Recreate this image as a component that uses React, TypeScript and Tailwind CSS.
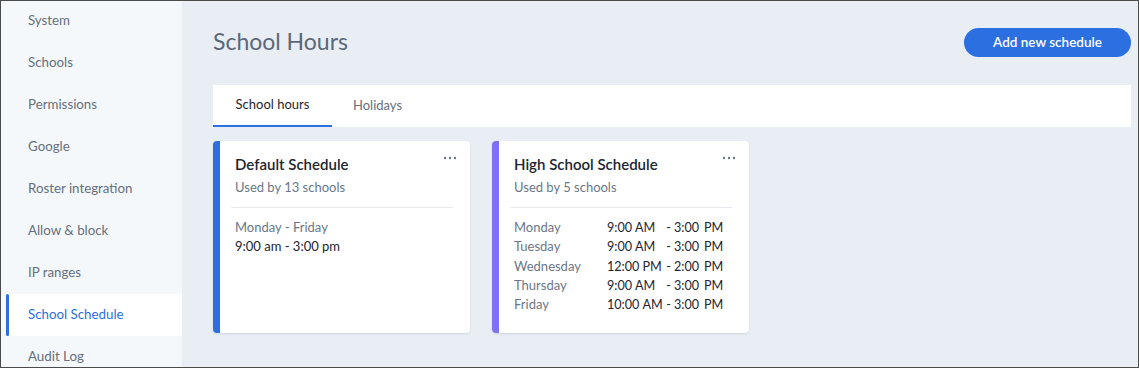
import React from 'react';

const navItems = [
  'System',
  'Schools',
  'Permissions',
  'Google',
  'Roster integration',
  'Allow & block',
  'IP ranges',
  'School Schedule',
  'Audit Log',
];

const highSchool = [
  { day: 'Monday', from: '9:00', fm: 'AM', to: '3:00', tm: 'PM' },
  { day: 'Tuesday', from: '9:00', fm: 'AM', to: '3:00', tm: 'PM' },
  { day: 'Wednesday', from: '12:00', fm: 'PM', to: '2:00', tm: 'PM' },
  { day: 'Thursday', from: '9:00', fm: 'AM', to: '3:00', tm: 'PM' },
  { day: 'Friday', from: '10:00', fm: 'AM', to: '3:00', tm: 'PM' },
];

const Dots: React.FC = () => (
  <svg width="14" height="4" viewBox="0 0 14 4" className="absolute right-[13px] top-[15px]">
    <circle cx="2" cy="2" r="1.2" fill="#6b7789" />
    <circle cx="7" cy="2" r="1.2" fill="#6b7789" />
    <circle cx="12" cy="2" r="1.2" fill="#6b7789" />
  </svg>
);

const Card: React.FC<{ accent: string; title: string; used: string; children: React.ReactNode }> = ({
  accent,
  title,
  used,
  children,
}) => (
  <div className="relative flex w-[257px] h-[192px] bg-white rounded-[4px] overflow-hidden shadow-[0_1px_2px_rgba(30,50,80,0.12)]">
    <div className={`w-[7px] shrink-0 ${accent}`} />
    <div className="flex-1 pl-[11px] pr-[17px] pt-[13px]">
      <div className="pl-[4px]">
        <h3 className="text-[15px] font-semibold text-[#1d2530] leading-[20px]">{title}</h3>
        <p className="mt-[3px] text-[13px] text-[#6b7789] leading-[20px]">{used}</p>
      </div>
      <div className="mt-[10px] h-px bg-[#e6eaef]" />
      <div className="pl-[4px] pt-[10px]">{children}</div>
    </div>
    <Dots />
  </div>
);

export default function App() {
  return (
    <div
      className="w-[1139px] h-[368px] border border-[#4b4b4b] flex overflow-hidden bg-[#e9eef5]"
      style={{ fontFamily: 'Lato, "Noto Sans", sans-serif' }}
    >
      <aside className="w-[181px] shrink-0 bg-[#f5f8fb] pl-[5px] -mt-px">
        {navItems.map((item) => {
          const active = item === 'School Schedule';
          return (
            <div
              key={item}
              className={`relative h-[42px] flex items-center pl-[22px] text-[13.3px] ${
                active ? 'bg-white text-[#2b6fe0]' : 'text-[#656f7d]'
              }`}
            >
              {active && <span className="absolute left-0 top-0 bottom-0 w-[3px] rounded-full bg-[#2b6fe0]" />}
              {item}
            </div>
          );
        })}
      </aside>

      <main className="flex-1 pl-[31px] pr-[7px] pt-[27px]">
        <div className="flex items-center justify-between h-[29px]">
          <h1 className="text-[23px] text-[#5b6779] leading-none -mt-[2px]">School Hours</h1>
          <button className="w-[167px] h-[29px] rounded-full bg-[#2b6fe0] text-white text-[13.5px] font-semibold">
            Add new schedule
          </button>
        </div>

        <div className="mt-[28px] h-[42px] bg-white flex">
          <div className="w-[119px] flex items-center justify-center text-[13px] text-[#1d2530] border-b-2 border-[#2b6fe0]">
            School hours
          </div>
          <div className="px-[21px] flex items-center text-[13px] text-[#656f7d]">Holidays</div>
        </div>

        <div className="mt-[14px] flex gap-[22px]">
          <Card accent="bg-[#2b6fe0]" title="Default Schedule" used="Used by 13 schools">
            <p className="text-[13px] text-[#6b7789] leading-[19px]">Monday - Friday</p>
            <p className="text-[13px] text-[#1d2530] leading-[19px]">9:00 am - 3:00 pm</p>
          </Card>
          <Card accent="bg-[#7f72f2]" title="High School Schedule" used="Used by 5 schools">
            {highSchool.map((r) => (
              <div key={r.day} className="flex text-[13px] leading-[19.3px]">
                <span className="w-[93px] text-[#6b7789]">{r.day}</span>
                <span className="flex text-[#1d2530] text-[12.6px]">
                  <span className="flex w-[57px] shrink-0">
                    <span>{r.from}</span>
                    <span className="ml-[3px]">{r.fm}</span>
                  </span>
                  <span className="w-[9px] shrink-0 text-center">-</span>
                  <span className="ml-[1px] min-w-[30px]">{r.to}</span>
                  <span>{r.tm}</span>
                </span>
              </div>
            ))}
          </Card>
        </div>
      </main>
    </div>
  );
}
